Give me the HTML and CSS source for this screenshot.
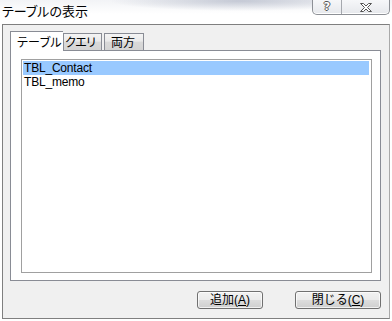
FILE: index.html
```html
<!DOCTYPE html>
<html lang="ja">
<head>
    <meta charset="UTF-8">
    <title>テーブルの表示</title>
    <link rel="stylesheet" href="styles.css">
</head>
<body>
    <div class="titlebar">
        <div class="title">テーブルの表示</div>
        <div class="caption-buttons">
            <span class="cap-btn help">?</span>
            <span class="cap-btn close">
                <svg width="14" height="11" viewBox="0 0 14 11">
                    <path d="M1.5 1.5h3l2.5 2.5 2.5-2.5h3l-4 4 4 4h-3l-2.5-2.5-2.5 2.5h-3l4-4z" fill="#fff" stroke="#555" stroke-width="1" stroke-linejoin="round"/>
                </svg>
            </span>
        </div>
    </div>

    <div class="window">
        <div class="tabs">
            <div class="tab active">テーブル</div>
            <div class="tab query">クエリ</div>
            <div class="tab gap">両方</div>
        </div>
        <div class="tab-panel">
            <ul class="listbox">
                <li class="selected">TBL_Contact</li>
                <li>TBL_memo</li>
            </ul>
        </div>
        <div class="buttons">
            <button class="btn add">追加(<u>A</u>)</button>
            <button class="btn close-btn">閉じる(<u>C</u>)</button>
        </div>
    </div>
</body>
</html>
```

FILE: styles.css
```css
html, body {
    margin: 0;
    padding: 0;
}

body {
    width: 392px;
    height: 321px;
    overflow: hidden;
    background: #fff;
    font-family: "Liberation Sans", "Noto Sans CJK JP", sans-serif;
    font-size: 12px;
    color: #000;
}

/* TITLE BAR */
.titlebar {
    height: 24px;
    display: flex;
    justify-content: space-between;
    align-items: flex-start;
    background:
        radial-gradient(ellipse 130px 10px at 240px 1px, rgba(165, 172, 190, 0.6), rgba(255,255,255,0)),
        linear-gradient(180deg, #f2f3f6 0, #ffffff 14px);
}

.title {
    font-family: "Noto Sans CJK JP", sans-serif;
    font-feature-settings: "palt";
    font-size: 13px;
    line-height: 16px;
    padding: 3px 0 0 2px;
    color: #000;
}

.caption-buttons {
    display: flex;
    margin-right: 2px;
    height: 14px;
    border: 1px solid #8d9096;
    border-top: none;
    border-radius: 0 0 5px 5px;
    background: linear-gradient(180deg, #f6f7f9, #e6e8ec);
    box-shadow: inset 0 -1px 0 #fff;
}

.cap-btn {
    display: flex;
    align-items: center;
    justify-content: center;
}

.help {
    width: 28px;
    border-right: 1px solid #a5a8ae;
    font-family: "DejaVu Sans", sans-serif;
    font-weight: bold;
    font-size: 11px;
    line-height: 12px;
    color: #fff;
    text-shadow: 1px 0 0 #555, -1px 0 0 #555, 0 1px 0 #555, 0 -1px 0 #555;
}

.close {
    width: 47px;
}

/* WINDOW BODY */
.window {
    box-sizing: border-box;
    width: 388px;
    height: 295px;
    margin-left: 2px;
    border: 1px solid #7f7f7f;
    border-right-color: #a9a9a9;
    background: #f0f0f0;
    padding: 7px 8px 0 7px;
}

.tabs {
    display: flex;
    align-items: flex-end;
    height: 19px;
    margin-bottom: -1px;
    position: relative;
    z-index: 1;
}

.tab {
    box-sizing: border-box;
    width: 39px;
    height: 17px;
    margin-bottom: 1px;
    padding: 0 0 0 4px;
    border: 1px solid #898c95;
    border-bottom: none;
    background: linear-gradient(180deg, #f4f4f4 0, #eaeaea 45%, #d9d9d9 50%, #d4d4d4 100%);
    font-family: "Noto Sans CJK JP", sans-serif;
    font-feature-settings: "palt";
    font-size: 12px;
    line-height: 16px;
    white-space: nowrap;
    overflow: hidden;
}

.tab.query {
    padding-left: 1px;
    letter-spacing: -0.6px;
}

.tab.gap {
    margin-left: 2px;
    width: 40px;
    padding-left: 6px;
}

.tab.active {
    width: 53px;
    height: 20px;
    margin-bottom: 0;
    padding: 2px 0 0 6px;
    background: #fff;
    border-right: none;
    letter-spacing: 0.3px;
}

.tab-panel {
    box-sizing: border-box;
    width: 371px;
    height: 231px;
    border: 1px solid #898c95;
    background: #fff;
    padding: 8px 0 0 10px;
}

.listbox {
    box-sizing: border-box;
    width: 351px;
    height: 214px;
    margin: 0;
    padding: 1px 2px 1px 1px;
    list-style: none;
    border: 1px solid #a0a0a0;
    background: #fff;
}

.listbox li {
    height: 14px;
    line-height: 14px;
    padding-left: 1px;
    letter-spacing: -0.2px;
    white-space: nowrap;
}

.listbox li.selected {
    background: #99c9ff;
}

/* BUTTONS */
.buttons {
    display: flex;
    justify-content: flex-end;
    gap: 32px;
    width: 371px;
    margin-top: 10px;
}

.btn {
    box-sizing: border-box;
    height: 18px;
    padding: 0;
    border: 1px solid #707070;
    border-radius: 3px;
    background: linear-gradient(180deg, #f2f2f2 0, #ebebeb 48%, #dddddd 52%, #cfcfcf 100%);
    box-shadow: inset 0 0 0 1px rgba(255,255,255,0.7);
    font-family: "Liberation Sans", "Noto Sans CJK JP", sans-serif;
    font-size: 12px;
    line-height: 15px;
    color: #000;
}

.btn.add {
    width: 66px;
}

.btn.close-btn {
    width: 86px;
}
```
